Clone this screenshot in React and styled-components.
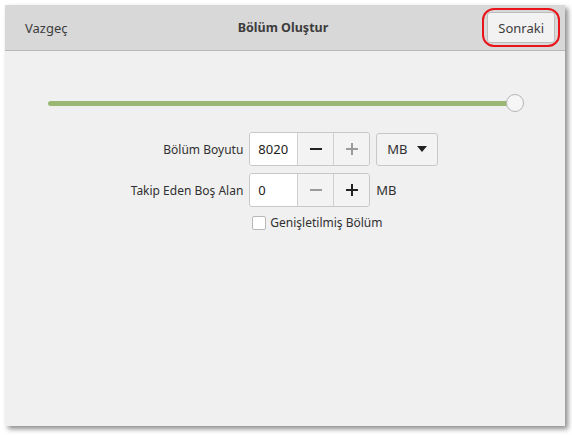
import React from "react";
import styled, { createGlobalStyle } from "styled-components";

const Global = createGlobalStyle`
  html, body {
    margin: 0;
    padding: 0;
    background: #ffffff;
    font-family: "Noto Sans", "DejaVu Sans", sans-serif;
  }
`;

const Page = styled.div`
  width: 572px;
  height: 435px;
  padding: 5px 0 0 5px;
  box-sizing: border-box;
`;

const Window = styled.div`
  width: 560px;
  height: 421px;
  background: #f0f0f0;
  box-shadow: 3px 3px 5px rgba(0, 0, 0, 0.45);
  display: flex;
  flex-direction: column;
`;

const HeaderBar = styled.div`
  height: 45px;
  background: #d8d8d8;
  border-bottom: 1px solid #b8b8b8;
  display: grid;
  grid-template-columns: 1fr auto 1fr;
  align-items: center;
  padding: 0 10px 0 20px;
  font-size: 13px;
  color: #3c3c3c;
`;

const Cancel = styled.span`
  justify-self: start;
`;

const Title = styled.span`
  font-weight: bold;
  font-size: 12.5px;
  margin-left: -14px;
`;

const NextWrap = styled.div`
  justify-self: end;
  position: relative;
`;

const NextButton = styled.div`
  height: 31px;
  padding: 0 10px;
  box-sizing: border-box;
  display: flex;
  align-items: center;
  background: #f2f2f2;
  border: 1px solid #bdbdbd;
  border-radius: 3px;
  color: #3c3c3c;
`;

const Highlight = styled.div`
  position: absolute;
  left: -5px;
  top: -4px;
  right: -5px;
  bottom: -4px;
  border: 2px solid #e8141a;
  border-radius: 12px;
  pointer-events: none;
`;

const Body = styled.div`
  padding: 43px 41px 0 43px;
  display: flex;
  flex-direction: column;
  align-items: center;
`;

const Slider = styled.div`
  align-self: stretch;
  height: 18px;
  display: flex;
  align-items: center;
  position: relative;
`;

const Track = styled.div`
  flex: 1;
  height: 5px;
  border-radius: 3px;
  background: #9ab874;
  margin-right: 6px;
`;

const Knob = styled.div`
  position: absolute;
  right: 0;
  top: 0;
  width: 16px;
  height: 16px;
  border-radius: 50%;
  background: #f6f6f6;
  border: 1px solid #b5b5b5;
`;

const Form = styled.div`
  margin-top: 20px;
  margin-right: 3px;
  display: grid;
  grid-template-columns: auto auto auto;
  column-gap: 6px;
  row-gap: 7px;
  align-items: center;
  font-size: 12px;
  color: #303030;
`;

const Label = styled.span`
  justify-self: end;
`;

const Spin = styled.div`
  display: flex;
  height: 34px;
  border: 1px solid #c8c8c8;
  border-radius: 3px;
  box-sizing: border-box;
  overflow: hidden;
`;

const Entry = styled.div`
  width: 47px;
  background: #ffffff;
  display: flex;
  align-items: center;
  padding-left: 8px;
  box-sizing: border-box;
  font-size: 13px;
  color: #222;
`;

const SpinBtn = styled.div`
  width: 35px;
  border-left: 1px solid #d0d0d0;
  background: #f3f3f3;
  display: flex;
  align-items: center;
  justify-content: center;
  color: ${(p) => (p.$disabled ? "#9a9a9a" : "#222")};
`;

const Dropdown = styled.div`
  height: 33px;
  width: 62px;
  box-sizing: border-box;
  border: 1px solid #c8c8c8;
  border-radius: 3px;
  background: #f3f3f3;
  display: flex;
  align-items: center;
  justify-content: space-between;
  padding: 0 10px 0 10px;
  font-size: 13px;
`;

const Unit = styled.span`
  font-size: 13px;
`;

const CheckRow = styled.div`
  grid-column: 2 / 4;
  display: flex;
  align-items: center;
  gap: 4px;
  padding-left: 3px;
`;

const Box = styled.div`
  width: 12px;
  height: 12px;
  border: 1px solid #b8b8b8;
  border-radius: 2px;
  background: #fff;
`;

const Minus = ({ color }) => (
  <svg width="12" height="12" viewBox="0 0 12 12">
    <rect x="0" y="5" width="12" height="2" fill={color} />
  </svg>
);

const Plus = ({ color }) => (
  <svg width="12" height="12" viewBox="0 0 12 12">
    <rect x="0" y="5" width="12" height="2" fill={color} />
    <rect x="5" y="0" width="2" height="12" fill={color} />
  </svg>
);

const Caret = () => (
  <svg width="10" height="6" viewBox="0 0 10 6">
    <path d="M0 0 L10 0 L5 6 Z" fill="#222" />
  </svg>
);

export default function App() {
  return (
    <Page>
      <Global />
      <Window>
        <HeaderBar>
          <Cancel>Vazgeç</Cancel>
          <Title>Bölüm Oluştur</Title>
          <NextWrap>
            <NextButton>Sonraki</NextButton>
            <Highlight />
          </NextWrap>
        </HeaderBar>
        <Body>
          <Slider>
            <Track />
            <Knob />
          </Slider>
          <Form>
            <Label>Bölüm Boyutu</Label>
            <Spin>
              <Entry>8020</Entry>
              <SpinBtn>
                <Minus color="#222" />
              </SpinBtn>
              <SpinBtn $disabled>
                <Plus color="#9a9a9a" />
              </SpinBtn>
            </Spin>
            <Dropdown>
              <span>MB</span>
              <Caret />
            </Dropdown>
            <Label>Takip Eden Boş Alan</Label>
            <Spin>
              <Entry>0</Entry>
              <SpinBtn $disabled>
                <Minus color="#9a9a9a" />
              </SpinBtn>
              <SpinBtn>
                <Plus color="#222" />
              </SpinBtn>
            </Spin>
            <Unit>MB</Unit>
            <CheckRow>
              <Box />
              <span>Genişletilmiş Bölüm</span>
            </CheckRow>
          </Form>
        </Body>
      </Window>
    </Page>
  );
}
